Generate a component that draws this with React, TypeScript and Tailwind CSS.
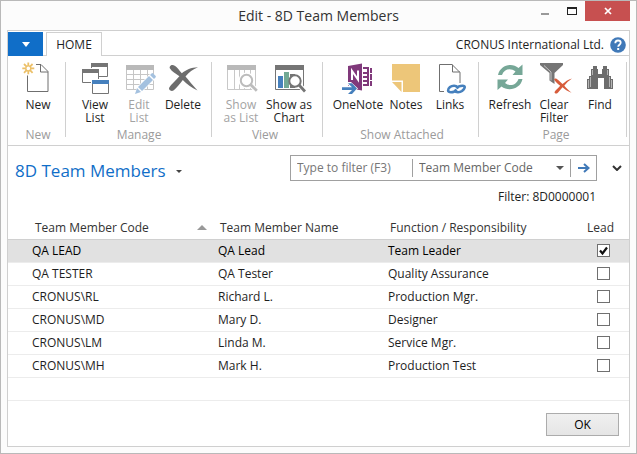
import { useState, type ReactNode } from "react";

type Member = { code: string; name: string; role: string; lead: boolean };

const initialMembers: Member[] = [
  { code: "QA LEAD", name: "QA Lead", role: "Team Leader", lead: true },
  { code: "QA TESTER", name: "QA Tester", role: "Quality Assurance", lead: false },
  { code: "CRONUS\\RL", name: "Richard L.", role: "Production Mgr.", lead: false },
  { code: "CRONUS\\MD", name: "Mary D.", role: "Designer", lead: false },
  { code: "CRONUS\\LM", name: "Linda M.", role: "Service Mgr.", lead: false },
  { code: "CRONUS\\MH", name: "Mark H.", role: "Production Test", lead: false },
];

function Icon({ children }: { children: ReactNode }) {
  return (
    <svg viewBox="0 0 32 32" className="h-8 w-8 shrink-0 overflow-visible" fill="none" aria-hidden="true">
      {children}
    </svg>
  );
}

const NewIcon = () => (
  <Icon>
    <path d="M14 2.5h5l7 7v20H5.5V13.500" stroke="#6f6f6f" />
    <path d="M18.500 2.500v7.500h7.500" stroke="#6f6f6f" />
    <path d="M6.300 0.500v3.500M6.300 8.700v3.500M0.300 6.400h3.500M8.800 6.400h3.500M2 2l2.600 2.600M8 8.200l2.600 2.600M10.600 2L8 4.600M4.600 8.200L2 10.800" stroke="#ecc069" strokeWidth="1.800" />
    <circle cx="6.300" cy="6.400" r="2.500" stroke="#ecc069" strokeWidth="1.400" />
  </Icon>
);

function MiniWindow({ x, y, color, line }: { x: number; y: number; color: string; line: string }) {
  return (
    <g>
      <path d={`M${x - 1} ${y - 1}h18v15h-18z`} fill="#fff" />
      <path d={`M${x + 0.5} ${y + 0.5}h16v13h-16z`} stroke={line} fill="#fff" />
      <path d={`M${x} ${y}h17v4h-17z`} fill={color} />
    </g>
  );
}

const ViewListIcon = () => (
  <Icon>
    <MiniWindow x={12} y={1} color="#757575" line="#757575" />
    <MiniWindow x={3} y={7} color="#757575" line="#757575" />
    <MiniWindow x={13} y={18} color="#4680bd" line="#757575" />
  </Icon>
);

const EditListIcon = () => (
  <Icon>
    <path d="M3 3h28v5H3z" fill="#b9b9b9" />
    <path d="M3.500 8v19.500h27V8M3 12.500h28M3 17.500h28M3 22.500h28M10.500 8v20M17.500 8v20M24.500 8v20" stroke="#c6c6c6" />
    <path d="M12 32l2-7L28 11l5 5-14 14z" fill="#fff" />
    <path d="M12 32l2-6 4 4zM15 25l11-11 4 4-11 11zM27 13l1.500-1.500a1.200 1.200 0 0 1 1.700 0l2.300 2.300a1.200 1.200 0 0 1 0 1.700L31 17z" fill="#a4c1df" />
  </Icon>
);

const DeleteIcon = () => (
  <Icon>
    <path d="M3 6.500c-.9-1.600.4-3.500 2.500-3.500 3 0 5.800 4 9.300 8.200C19 7.800 24 5.300 31 5.200c-5.200 2.200-9 5-12.500 9.300C21.800 18.500 25.500 23 30.500 28.500 24.500 26 19.800 22 15.800 18c-3 4-6.300 8-9 10.200C4.500 30 1 28 2.300 25.600 4 22.500 8.500 18.800 12.400 14.300 8.500 11.500 5 9.800 3 6.500z" fill="#6d6d6d" />
  </Icon>
);

function Magnifier({ color }: { color: string }) {
  return (
    <g>
      <path d="M26 23l6 6" stroke="#fff" strokeWidth="5" />
      <circle cx="21.500" cy="18.500" r="8" fill="#fff" />
      <circle cx="21.500" cy="18.500" r="5.700" stroke={color} strokeWidth="2" fill="#fff" />
      <path d="M25.500 22.500l6.300 6.300" stroke={color} strokeWidth="2.800" />
    </g>
  );
}

const ShowListIcon = () => (
  <Icon>
    <path d="M2 3h29v5H2z" fill="#b9b9b9" />
    <path d="M2.500 8v19.500h28V8M9.500 8v19M14.500 8v19M19.500 8v19M25.500 8v19" stroke="#c8c8c8" />
    <Magnifier color="#bcbcbc" />
  </Icon>
);

const ShowChartIcon = () => (
  <Icon>
    <path d="M2 3h29v5H2z" fill="#757575" />
    <path d="M2.500 8v19.500h28V8" stroke="#757575" />
    <path d="M5 14h5v12H5z" fill="#4680bd" />
    <path d="M11 10h5v16h-5z" fill="#72a994" />
    <path d="M17 12h5v14h-5z" fill="#757575" />
    <path d="M26 23l6 6" stroke="#fff" strokeWidth="5" />
    <circle cx="22" cy="19" r="5.700" stroke="#757575" strokeWidth="2" fill="#fff" />
    <path d="M26 23l6 6.500" stroke="#757575" strokeWidth="2.800" />
  </Icon>
);

const OneNoteIcon = () => (
  <Icon>
    <path d="M21 5h6v2h-6zM21 10h5v2h-5zM21 14h5v2h-5zM21 18h5v2h-5zM21 22h6v2h-6zM25 5h2v19h-2z" fill="#80397b" />
    <path d="M28 6h2v5h-2zM28 12h2v6h-2zM28 19h2v5h-2z" fill="#80397b" />
    <path d="M6 4l14-2.500v27L6 26z" fill="#80397b" />
    <path d="M10 18V9l6 8.500V8.500" stroke="#fff" strokeWidth="2" />
    <path d="M0 24h7l-3-4h5l7 6.500-7 6.500H4l3-4H0z" fill="#fff" />
    <path d="M0 25.200h10l-4-4h4l5 5.300-5 5.500H6l4-4H0z" fill="#4680bd" />
  </Icon>
);

const NotesIcon = () => (
  <Icon>
    <path d="M2 2h28v28H13V18.500H2z" fill="#edc679" />
    <path d="M2 20h9.500v10z" fill="#edc679" />
  </Icon>
);

const LinksIcon = () => (
  <Icon>
    <path d="M10 29.500H5.500v-27H18l8 8V21" stroke="#6f6f6f" />
    <path d="M18.500 2.500v7.500h7.500" stroke="#6f6f6f" />
    <path d="M23.500 25c-1.500-1.800-5.500-1.500-7.500 0-3 2.500-2.500 5.300 1 5.300 2.500 0 4-.6 5.500-2.800" stroke="#4680bd" strokeWidth="2.600" />
    <path d="M20.500 29c1.500 1.800 5.500 1.500 7.500 0 3-2.500 4-5.300.5-5.300-2.500 0-4.500.6-6 2.800" stroke="#4680bd" strokeWidth="2.600" />
  </Icon>
);

const RefreshIcon = () => (
  <Icon>
    <path d="M4 13C6 3.500 17.500 0 24.500 6L28.500 2.500V13H18.500l3-3.500C16.500 5.500 10 7 8 13z" fill="#76a797" />
    <path d="M28.500 17C26.500 27 14.500 30 7.500 24.500L3.500 28V17.500h10.500L11 21c5 4 11.500 2 13.500-4z" fill="#76a797" />
  </Icon>
);

const ClearFilterIcon = () => (
  <Icon>
    <path d="M2 1h23v2l-8.500 8v11l-5-3.500V11L2 3z" fill="#757575" />
    <path d="M6 3.500l7 6.500v8.500" stroke="#c6c6c6" />
    <path d="M16 17.200c1-1.300 2.800-.6 4.200.9l4.300 4C27 19.800 30 17.500 34 16.500c-3.200 2.200-5.500 4.300-7.700 7.200 2 2.200 4.500 4.800 7.200 7.100-4-1.500-6.800-3.600-9-5.500-2 2.400-3.500 4.500-5.200 5.900-1.200 1-3.400-.2-2.600-1.500 1.200-1.800 3.400-3.300 5.500-5.900-2-2-4.700-3.500-6.200-6.600z" fill="#d75c3b" />
  </Icon>
);

const FindIcon = () => (
  <Icon>
    <path d="M9 4h4v3h1v5h4V7h1V4h4v3h2v7h2v3h2v10h-9V16h-6v11H3V17h2v-3h2V7h2z" fill="#6d6d6d" />
    <path d="M8.500 8v5M6.500 15v10M4.500 18v8M23.500 8v5M25.500 15v10M27.500 18v8" stroke="#fff" strokeWidth="0.500" />
  </Icon>
);

type Command = { lines: string[]; width: string; icon: ReactNode; disabled?: boolean };
type Group = { title: string; pad: string; commands: Command[] };

const groups: Group[] = [
  { title: "New", pad: "pl-2 pr-[5px]", commands: [{ lines: ["New"], width: "w-11", icon: <NewIcon /> }] },
  {
    title: "Manage",
    pad: "pl-[7px] pr-1.5",
    commands: [
      { lines: ["View", "List"], width: "w-11", icon: <ViewListIcon /> },
      { lines: ["Edit", "List"], width: "w-11", icon: <EditListIcon />, disabled: true },
      { lines: ["Delete"], width: "w-11", icon: <DeleteIcon /> },
    ],
  },
  {
    title: "View",
    pad: "pl-[5px] pr-[9px]",
    commands: [
      { lines: ["Show", "as List"], width: "w-12", icon: <ShowListIcon />, disabled: true },
      { lines: ["Show as", "Chart"], width: "w-12", icon: <ShowChartIcon /> },
    ],
  },
  {
    title: "Show Attached",
    pad: "pl-[9px] pr-1.5",
    commands: [
      { lines: ["OneNote"], width: "w-13", icon: <OneNoteIcon /> },
      { lines: ["Notes"], width: "w-11", icon: <NotesIcon /> },
      { lines: ["Links"], width: "w-11", icon: <LinksIcon /> },
    ],
  },
  {
    title: "Page",
    pad: "pl-[9px] pr-0.5",
    commands: [
      { lines: ["Refresh"], width: "w-11", icon: <RefreshIcon /> },
      { lines: ["Clear", "Filter"], width: "w-11", icon: <ClearFilterIcon /> },
      { lines: ["Find"], width: "w-12", icon: <FindIcon /> },
    ],
  },
];

function RibbonGroup({ group }: { group: Group }) {
  return (
    <>
      <section aria-label={group.title} className={`flex flex-col justify-between ${group.pad}`}>
        <div className="flex">
          {group.commands.map((c) => (
            <button
              key={c.lines.join(" ")}
              type="button"
              disabled={c.disabled}
              className={`flex flex-col items-center whitespace-nowrap leading-[13px] disabled:text-[#a3a3a3] ${c.width}`}
            >
              {c.icon}
              <span className="flex flex-col items-center pt-1">
                {c.lines.map((l) => (
                  <span key={l}>{l}</span>
                ))}
              </span>
            </button>
          ))}
        </div>
        <div className="text-center leading-[13px] text-[#9b9b9b]">{group.title}</div>
      </section>
      <div className="mb-1 w-px bg-[#d0d0d0]" />
    </>
  );
}

export default function App() {
  const [members, setMembers] = useState(initialMembers);
  const toggle = (i: number) => setMembers(members.map((m, k) => (k === i ? { ...m, lead: !m.lead } : m)));

  return (
    <div className="flex min-h-screen flex-col border border-[#b9b9b9] bg-[#fcfcfc] px-1.5 pb-1.5 font-['Open_Sans','Noto_Sans',sans-serif] text-[12px] text-[#1e1e1e]">
      <header className="grid h-[29px] shrink-0 grid-cols-[1fr_auto_1fr] items-start">
        <span />
        <h1 className="text-[14px] leading-[29px] text-[#333]">Edit - 8D Team Members</h1>
        <div className="flex justify-end">
          <button type="button" aria-label="Minimize" className="flex h-5 w-[27px] items-center justify-center">
            <svg viewBox="0 0 8 10" className="h-2.5 w-2" aria-hidden="true">
              <path d="M0 7h8v2H0z" fill="#999" />
            </svg>
          </button>
          <button type="button" aria-label="Maximize" className="flex h-5 w-[27px] items-center justify-center">
            <svg viewBox="0 0 10 8" className="h-2 w-2.5" aria-hidden="true">
              <path d="M0 0h10v8H0zM1 2v5h8V2z" fill="#222" fillRule="evenodd" />
            </svg>
          </button>
          <button type="button" aria-label="Close" className="flex h-5 w-[45px] items-center justify-center bg-[#c75050]">
            <svg viewBox="0 0 8 8" className="h-2 w-2" aria-hidden="true">
              <path d="M1 1l6 6M7 1L1 7" stroke="#fff" strokeWidth="1.700" />
            </svg>
          </button>
        </div>
      </header>

      <main className="flex grow flex-col border border-[#cfcfcf] bg-white">
        <nav className="flex h-[25px] shrink-0">
          <button type="button" aria-label="Application menu" className="mt-px flex w-[35px] items-center justify-center bg-[#106ec8]">
            <svg viewBox="0 0 8 5" className="h-[5px] w-2" aria-hidden="true">
              <path d="M0 0h8L4 5z" fill="#fff" />
            </svg>
          </button>
          <div className="w-[3px] border-b border-[#d0d0d0]" />
          <button type="button" className="mt-px w-14 border border-b-0 border-[#d0d0d0] text-center text-[12px]">
            HOME
          </button>
          <div className="flex grow items-center justify-end gap-1.5 border-b border-[#d0d0d0] pr-[3px] pt-[3px]">
            <span>CRONUS International Ltd.</span>
            <button type="button" aria-label="Help">
              <svg viewBox="0 0 16 16" className="h-4 w-4" fill="none" aria-hidden="true">
                <circle cx="8" cy="8" r="7.800" fill="#4079b8" />
                <path d="M5.300 6.200C5.300 4.400 6.400 3.500 8 3.500s2.700.9 2.700 2.300c0 1.900-2.500 1.900-2.500 4" stroke="#fff" strokeWidth="1.800" />
                <path d="M7.200 11h2v2h-2z" fill="#fff" />
              </svg>
            </button>
          </div>
        </nav>

        <div className="flex h-[90px] shrink-0 border-b border-[#d0d0d0] pb-1 pt-1.5">
          {groups.map((g) => (
            <RibbonGroup key={g.title} group={g} />
          ))}
        </div>

        <div className="flex items-start justify-between pl-[7px] pr-[7px] pt-[9px]">
          <button type="button" className="flex items-center gap-2.5 pt-1 text-[#106ec8]">
            <h2 className="text-[17px] leading-6">8D Team Members</h2>
            <svg viewBox="0 0 6 3" className="h-[3px] w-1.5" aria-hidden="true">
              <path d="M0 0h6L3 3z" fill="#444" />
            </svg>
          </button>
          <div className="flex items-center gap-[15px]">
            <div className="flex h-[26px] w-[307px] items-center border border-[#a0a0a0] text-[#666]">
              <input
                type="text"
                aria-label="Filter value"
                placeholder="Type to filter (F3)"
                className="min-w-0 flex-1 px-1.5 outline-none placeholder:text-[#777]"
              />
              <span className="h-[18px] w-px bg-[#a0a0a0]" />
              <div className="grid w-[157px] grid-cols-1 items-center">
                <select aria-label="Filter field" className="col-start-1 row-start-1 w-full appearance-none bg-transparent pl-1.5 outline-none">
                  <option>Team Member Code</option>
                  <option>Team Member Name</option>
                </select>
                <svg viewBox="0 0 8 4" className="pointer-events-none col-start-1 row-start-1 mr-1.5 h-1 w-2 justify-self-end" aria-hidden="true">
                  <path d="M0 0h8L4 4z" fill="#555" />
                </svg>
              </div>
              <span className="h-[18px] w-px bg-[#a0a0a0]" />
              <button type="button" aria-label="Apply filter" className="flex h-full w-[25px] items-center justify-center">
                <svg viewBox="0 0 12 10" className="h-2.5 w-3" fill="none" aria-hidden="true">
                  <path d="M0 5h10M6 1l4.500 4L6 9" stroke="#4079b8" strokeWidth="2" />
                </svg>
              </button>
            </div>
            <button type="button" aria-label="Expand filter pane">
              <svg viewBox="0 0 10 6" className="h-1.5 w-2.5" fill="none" aria-hidden="true">
                <path d="M1 1l4 4 4-4" stroke="#333" strokeWidth="2" />
              </svg>
            </button>
          </div>
        </div>
        <p className="pr-[33px] pt-[5px] text-right leading-[18px]">Filter: 8D0000001</p>

        <table className="mt-[11px] w-full table-fixed border-collapse text-left">
          <colgroup>
            <col className="w-[202px]" />
            <col className="w-[170px]" />
            <col />
            <col className="w-[50px]" />
          </colgroup>
          <thead>
            <tr className="h-[22px] border-b border-[#d0d0d0] text-[#333]">
              <th className="p-0 pl-[27px] pr-[3px] font-normal">
                <span className="flex items-center justify-between">
                  Team Member Code
                  <svg viewBox="0 0 10 5" className="h-[5px] w-2.5" aria-hidden="true">
                    <path d="M0 5h10L5 0z" fill="#999" />
                  </svg>
                </span>
              </th>
              <th className="p-0 pl-2.5 font-normal">Team Member Name</th>
              <th className="p-0 pl-2.5 font-normal">Function / Responsibility</th>
              <th className="p-0 pl-2 font-normal">Lead</th>
            </tr>
          </thead>
          <tbody>
            {members.map((m, i) => (
              <tr key={m.code} className="h-[23px] border-b border-[#ececec] first:bg-[#e1e1e1] first:text-black">
                <td className="p-0 pl-6">{m.code}</td>
                <td className="p-0 pl-2">{m.name}</td>
                <td className="p-0 pl-2">{m.role}</td>
                <td className="p-0 pr-0.5">
                  <div className="mx-auto grid w-[13px] grid-cols-1">
                    <input
                      type="checkbox"
                      aria-label={`Lead: ${m.name}`}
                      checked={m.lead}
                      onChange={() => toggle(i)}
                      className="peer col-start-1 row-start-1 h-[13px] w-[13px] appearance-none border border-[#707070] bg-white"
                    />
                    <svg viewBox="0 0 13 13" className="pointer-events-none invisible col-start-1 row-start-1 h-[13px] w-[13px] peer-checked:visible" fill="none" aria-hidden="true">
                      <path d="M3 6.500l2.500 3L10 3.500" stroke="#111" strokeWidth="2.200" />
                    </svg>
                  </div>
                </td>
              </tr>
            ))}
            <tr className="h-[23px] border-b border-[#ececec]">
              <td colSpan={4} className="p-0" />
            </tr>
          </tbody>
        </table>

        <footer className="mt-auto flex justify-end pb-2.5 pr-2.5 pt-3">
          <button type="button" className="h-[23px] w-[73px] border border-[#acacac] bg-linear-to-b from-[#f0f0f0] to-[#e5e5e5] text-black">
            OK
          </button>
        </footer>
      </main>
    </div>
  );
}
